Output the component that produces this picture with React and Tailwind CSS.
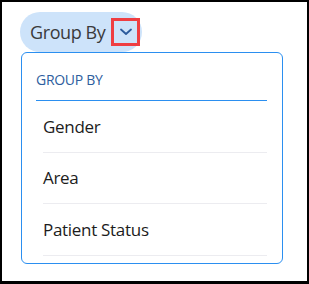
import React from 'react';

const options = ['Gender', 'Area', 'Patient Status'];

const App = () => {
  return (
    <div
      className="w-[309px] h-[284px] border-2 border-b-[3px] border-black bg-white overflow-hidden"
      style={{ fontFamily: '"Open Sans", "Noto Sans", sans-serif' }}
    >
      {/* Trigger pill */}
      <div className="ml-[18px] mt-[10px] h-[40px] w-fit rounded-full bg-[#cde3fa] flex items-center pl-[10px] pr-[2px]">
        <span className="text-[18px] text-[#3a3a3a] tracking-[-0.4px] whitespace-nowrap">Group By</span>
        <div className="ml-[6px] flex-none w-[29px] h-[28px] border-[3px] border-[#ef3e42] flex items-center justify-center">
          <svg width="12" height="8" viewBox="0 0 12 8" fill="none">
            <path d="M1 1.5 L6 6 L11 1.5" stroke="#2c5b9c" strokeWidth="1.8" strokeLinecap="round" strokeLinejoin="round" />
          </svg>
        </div>
      </div>

      {/* Dropdown panel */}
      <div className="ml-[19px] w-[262px] h-[212px] border border-[#2b8ff0] rounded-md bg-white pl-[14px] pr-[15px]">
        <div className="pt-[16px] pb-[10px] border-b border-[#2b8ff0] text-[14px] text-[#2e5e9e] tracking-[-0.3px]">
          GROUP BY
        </div>
        <ul className="pl-[7px]">
          {options.map((opt) => (
            <li key={opt} className="h-[51.5px] flex items-center border-b border-[#ececf0] text-[17px] text-[#1c1c1c] tracking-[-0.3px]">
              {opt}
            </li>
          ))}
        </ul>
      </div>
    </div>
  );
};

export default App;
